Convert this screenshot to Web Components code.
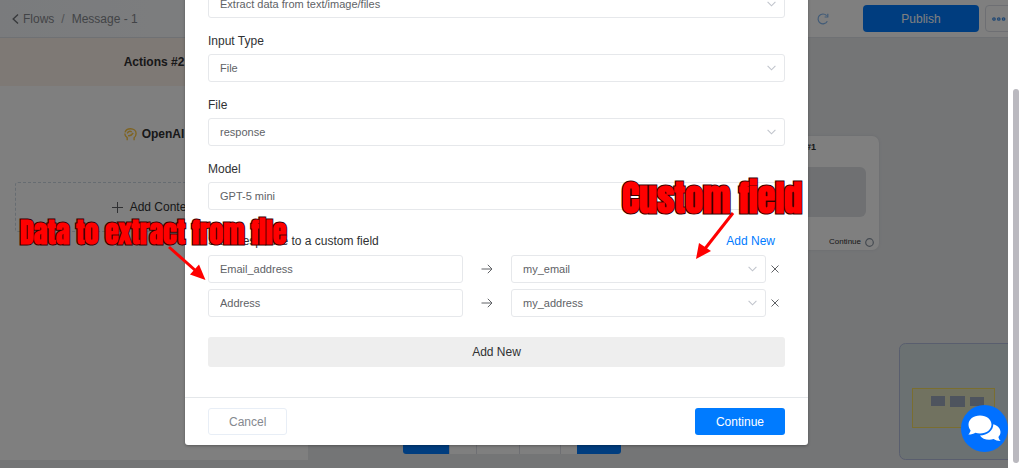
<!DOCTYPE html>
<html lang="en">
<head>
<meta charset="utf-8">
<title>Flow editor</title>
<style>
  html, body {
    margin: 0;
    height: 100%;
    overflow: hidden;
  }
  body {
    font-family: "Liberation Sans", Arial, sans-serif;
    font-size: 12px;
    color: #303133;
    background: #fff;
    --primary: #007bff;
    --border: #e6e8eb;
  }
</style>
</head>
<body>
<flow-app></flow-app>

<script>
function attach(el, html) {
  el.attachShadow({ mode: "open" }).innerHTML = html;
}

class TopBar extends HTMLElement {
  constructor() {
    super();
    attach(this, `
      <style>
        :host {
          display: flex;
          align-items: center;
          height: 37px;
          padding-left: 12px;
          margin-right: -5px;
          background: linear-gradient(90deg, #f4f7fb, #fff 40%);
          border-bottom: 1px solid #dfe3e8;
        }
        nav {
          display: flex;
          align-items: center;
          flex: 1;
          color: #85888e;
        }
        a {
          display: flex;
          align-items: center;
          gap: 4px;
          color: inherit;
          text-decoration: none;
        }
        .sep { margin: 0 7px; color: #a0a3a9; }
        button {
          font: inherit;
          height: 27px;
          padding: 0;
          border-radius: 4px;
          box-sizing: border-box;
        }
        .refresh {
          width: 12px;
          margin-right: 34px;
          border: 0;
          background: none;
        }
        .publish {
          width: 116px;
          margin-right: 6px;
          border: 0;
          background: var(--primary);
          color: #fff;
        }
        .more {
          width: 28px;
          border: 1px solid #dcdfe6;
          background: #fff;
        }
        svg { display: block; }
        .more svg { margin-left: 6px; }
      </style>
      <nav>
        <a href="#flows">
          <svg width="7" height="10" fill="none" stroke="#707378" stroke-width="1.4"><path d="M6 0.5 1.2 5 6 9.5"/></svg>
          Flows
        </a>
        <span class="sep">/</span>
        <span>Message - 1</span>
      </nav>
      <button class="refresh" aria-label="Refresh">
        <svg width="12" height="12" fill="none" stroke="#82b6ef" stroke-width="1.2"><path d="M10.3 8.2A4.9 4.9 0 1 1 9.6 2.6M10.8 0.8V4H7.6"/></svg>
      </button>
      <button class="publish">Publish</button>
      <button class="more" aria-label="More">
        <svg width="14" height="4" fill="none" stroke="#3f8fe6" stroke-width="1.3"><circle cx="2" cy="2" r="1.2"/><circle cx="6.8" cy="2" r="1.2"/><circle cx="11.6" cy="2" r="1.2"/></svg>
      </button>
    `);
  }
}
customElements.define("top-bar", TopBar);

class SidePanel extends HTMLElement {
  constructor() {
    super();
    attach(this, `
      <style>
        :host {
          display: flex;
          flex-direction: column;
          width: 308px;
          margin-bottom: 8px;
          background: #fff;
        }
        h2 {
          margin: 0;
          font-size: 12px;
          line-height: 48px;
          text-align: center;
          background: #fdf2ea;
        }
        .item {
          display: flex;
          align-items: center;
          justify-content: center;
          gap: 5px;
          height: 96px;
          font-weight: bold;
        }
        .add {
          display: flex;
          align-items: center;
          justify-content: center;
          gap: 7px;
          height: 50px;
          margin: 0 15px;
          padding: 0;
          font: inherit;
          color: inherit;
          background: none;
          border: 1px dashed #ccd8e2;
          border-radius: 3px;
        }
      </style>
      <h2>Actions #2</h2>
      <div class="item">
        <svg width="13" height="13" fill="none" stroke="#ffc845" stroke-width="1.4">
          <path d="M3.200 12.300V9.600C1.200 8.400.8 7 .8 5.600M1 4.400C1.800 1.800 4 .8 6.500.8c3.200 0 5.600 2 5.600 4.800 0 2-.9 3.300-2 4.200v2.500"/>
          <path d="M3.200 5.400C4 3.600 6 3 7.800 3.800M4 7.600c2.400.6 4-.8 5.200-2.600"/>
        </svg>
        OpenAI
      </div>
      <button class="add">
        <svg width="11" height="11" stroke="#606266"><path d="M5.5 0v11M0 5.5h11"/></svg>
        Add Content
      </button>
    `);
  }
}
customElements.define("side-panel", SidePanel);

class FlowCanvas extends HTMLElement {
  constructor() {
    super();
    attach(this, `
      <style>
        :host {
          display: block;
          flex: 1;
          position: relative;
        }
        .node {
          position: absolute;
          top: 98px;
          right: 129px;
          width: 176px;
          height: 114px;
          box-sizing: border-box;
          padding: 0 13px;
          background: #fff;
          border-radius: 7px;
          box-shadow: 0 0 3px #d3d6da;
        }
        .title {
          padding-right: 50px;
          font-size: 9px;
          font-weight: bold;
          line-height: 22px;
          text-align: right;
        }
        .content {
          height: 50px;
          margin-top: 9px;
          background: #dfe1e5;
          border-radius: 6px;
        }
        .out {
          display: flex;
          align-items: center;
          justify-content: flex-end;
          gap: 4px;
          margin: 20px -8px 0 0;
          font-size: 8px;
          line-height: 10px;
        }
        .minimap {
          position: absolute;
          right: -9px;
          bottom: 8px;
        }
        .tools {
          position: absolute;
          left: 95px;
          bottom: 14px;
          display: grid;
          grid-template-columns: 46px 27px 43px 41px 17px 44px;
          height: 28px;
          border-radius: 3px;
          overflow: hidden;
          background: #fff;
        }
        .tools span + span { border-left: 1px solid #dcdfe6; }
        .tools span:first-child, .tools span:last-child {
          background: var(--primary);
          border: 0;
        }
      </style>
      <div class="node">
        <div class="title">#1</div>
        <div class="content"></div>
        <div class="out">
          Continue
          <svg width="9" height="9" fill="none" stroke="#8a95a3" stroke-width="1.2"><circle cx="4.5" cy="4.5" r="3.8"/></svg>
        </div>
      </div>
      <svg class="minimap" width="118" height="117">
        <rect x=".5" y=".5" width="117" height="116" rx="6" fill="#d6e2e4" stroke="#b2bcdc"/>
        <rect x="13.5" y="45.5" width="82" height="39" fill="#e2e4c0" stroke="#f4dc60"/>
        <g fill="#9ca8bc"><path d="M32 53h14v10H32zM51 53h15v11H51zM71 54h14v9H71z"/></g>
      </svg>
      <div class="tools"><span></span><span></span><span></span><span></span><span></span><span></span></div>
    `);
  }
}
customElements.define("flow-canvas", FlowCanvas);

class SelectBox extends HTMLElement {
  constructor() {
    super();
    const label = this.getAttribute("label") || "";
    const value = this.getAttribute("value");
    const hidden = this.hasAttribute("plain");
    attach(this, `
      <style>
        :host { display: block; }
        label {
          display: block;
          line-height: 26px;
        }
        .box {
          display: grid;
          grid-template-columns: 1fr 18px;
          align-items: center;
        }
        select {
          grid-area: 1 / 1 / 2 / 3;
          width: 100%;
          height: 28px;
          padding: 0 11px;
          font: inherit;
          font-size: 11px;
          color: #606266;
          background: #fff;
          border: 1px solid var(--border);
          border-radius: 3px;
          appearance: none;
        }
        svg {
          grid-area: 1 / 2;
          pointer-events: none;
        }
      </style>
      ${hidden ? "" : `<label for="select">${label}</label>`}
      <div class="box">
        <select id="select" ${hidden ? `aria-label="${label}"` : ""}><option>${value}</option></select>
        <svg width="9" height="6" fill="none" stroke="#c0c4cc" stroke-width="1.1"><path d="M.6.8 4.5 4.8 8.4.8"/></svg>
      </div>
    `);
  }
}
customElements.define("select-box", SelectBox);

class MappingRow extends HTMLElement {
  constructor() {
    super();
    attach(this, `
      <style>
        :host {
          display: grid;
          grid-template-columns: 1fr 48px 1fr 19px;
          align-items: center;
        }
        input {
          width: 100%;
          height: 28px;
          box-sizing: border-box;
          padding: 0 11px;
          font: inherit;
          font-size: 11px;
          color: #606266;
          border: 1px solid var(--border);
          border-radius: 3px;
        }
        svg { display: block; }
        .arrow { justify-self: center; }
        button {
          justify-self: end;
          width: 14px;
          height: 14px;
          padding: 3px 0;
          border: 0;
          background: none;
        }
      </style>
      <input aria-label="Data to extract" value="${this.getAttribute("name")}">
      <svg class="arrow" width="12" height="10" fill="none" stroke="#606266"><path d="M.5 5h10.3M6.8.8 11 5 6.8 9.2"/></svg>
      <select-box plain label="Custom field" value="${this.getAttribute("field")}"></select-box>
      <button aria-label="Remove">
        <svg width="8" height="8" stroke="#606266"><path d="M.5.5l7 7M7.5.5l-7 7"/></svg>
      </button>
    `);
  }
}
customElements.define("mapping-row", MappingRow);

class ModalDialog extends HTMLElement {
  constructor() {
    super();
    attach(this, `
      <style>
        :host {
          display: block;
          width: 623px;
          max-width: 100%;
          background: #fff;
          border-radius: 3px;
          box-shadow: 0 1px 3px rgba(0, 0, 0, .3);
        }
        .body {
          padding: 20px 23px 30px;
        }
        footer {
          display: flex;
          justify-content: space-between;
          padding: 10px 23px;
          border-top: 1px solid #e4e7ea;
        }
      </style>
      <div class="body"><slot></slot></div>
      <footer><slot name="footer"></slot></footer>
    `);
  }
}
customElements.define("modal-dialog", ModalDialog);

class CalloutNote extends HTMLElement {
  constructor() {
    super();
    attach(this, `
      <style>
        :host {
          position: absolute;
          font-family: Impact, Anton, "Roboto Condensed", "Open Sans Condensed", "Noto Sans Condensed", "Liberation Sans", sans-serif;
          font-weight: 900;
          line-height: 1;
          color: #f00;
          white-space: nowrap;
          pointer-events: none;
          -webkit-text-stroke: 2px #300;
          paint-order: stroke fill;
        }
      </style>
      <slot></slot>
    `);
  }
}
customElements.define("callout-note", CalloutNote);

class FlowApp extends HTMLElement {
  constructor() {
    super();
    attach(this, `
      <style>
        :host {
          display: flex;
          position: relative;
          height: 100vh;
          overflow: hidden;
        }
        .page {
          display: flex;
          flex-direction: column;
          flex: 1;
          min-width: 0;
          overflow: hidden;
          background: #e8eaed;
        }
        main {
          display: flex;
          flex: 1;
        }
        .scroll {
          width: 16px;
          display: flex;
          box-sizing: border-box;
          padding: 89px 5px 5px;
        }
        .scroll div {
          flex: 1;
          border-radius: 3px;
          background: #bab9bf;
        }
        .overlay {
          position: absolute;
          inset: 0 16px 0 0;
          display: flex;
          align-items: flex-end;
          justify-content: center;
          padding: 0 15px 23px 0;
          overflow: hidden;
          background: rgba(0, 0, 0, .5);
        }
        select-box { margin-bottom: 10px; }
        .row {
          display: flex;
          justify-content: space-between;
          margin-top: 17px;
          padding-right: 10px;
          line-height: 28px;
        }
        .row a {
          color: var(--primary);
          text-decoration: none;
        }
        mapping-row + mapping-row { margin-top: 6px; }
        button {
          font: inherit;
          height: 27px;
          padding: 0 20px;
          border: 0;
          border-radius: 3px;
        }
        .wide {
          width: 100%;
          height: 30px;
          margin-top: 20px;
          display: block;
          color: #303133;
          background: #eee;
        }
        .cancel {
          color: #85898f;
          background: #fff;
          border: 1px solid #e8eef6;
        }
        .primary {
          padding: 0 21px;
          color: #fff;
          background: var(--primary);
        }
        .chat {
          position: absolute;
          right: 16px;
          bottom: 16px;
          width: 47px;
          height: 47px;
          padding: 0 0 0 7px;
          border-radius: 50%;
          background: #0070ff;
        }
        .chat svg { display: block; }
        .arrows {
          position: absolute;
          left: 0;
          top: 0;
          pointer-events: none;
        }
        .data { left: 20px; top: 218px; font-size: 28px; }
        .custom { left: 622px; top: 180px; font-size: 36px; }
      </style>
      <div class="page">
        <top-bar></top-bar>
        <main>
          <side-panel></side-panel>
          <flow-canvas></flow-canvas>
        </main>
      </div>
      <div class="scroll"><div></div></div>
      <div class="overlay">
        <modal-dialog>
          <select-box plain label="Action" value="Extract data from text/image/files"></select-box>
          <select-box label="Input Type" value="File"></select-box>
          <select-box label="File" value="response"></select-box>
          <select-box label="Model" value="GPT-5 mini"></select-box>
          <div class="row"><span>Save response to a custom field</span><a href="#add">Add New</a></div>
          <mapping-row name="Email_address" field="my_email"></mapping-row>
          <mapping-row name="Address" field="my_address"></mapping-row>
          <button class="wide">Add New</button>
          <button slot="footer" class="cancel">Cancel</button>
          <button slot="footer" class="primary">Continue</button>
        </modal-dialog>
      </div>
      <button class="chat" aria-label="Chat">
        <svg width="33" height="27" fill="#fff">
          <path d="M12 .5C18.600.5 23.500 4.400 23.500 9.500S18.600 18.500 12 18.500c-1.600 0-3.200-.3-4.600-.8C5.600 18.800 3.500 19.500.3 19.500c1.200-1.200 2-2.700 2.300-4.100C1.200 13.800.5 11.700.5 9.500.5 4.400 5.400.5 12 .5z"/>
          <path d="M25.300 9.200c4.300 1.100 7.200 4.200 7.200 7.800 0 2-.8 3.600-2.100 4.900.3 1.500 1.100 2.900 2.300 4.100-3 0-5.400-.7-7.100-1.900-1.400.5-2.900.7-4.400.7-4 0-7.600-1.700-9.300-4.400 7.200.1 13.400-4.700 13.400-11.200z"/>
        </svg>
      </button>
      <svg class="arrows" width="1008" height="468" fill="#f00" stroke="#f00">
        <path d="M169 247 196 271" stroke-width="3"/>
        <path d="M205.500 280 199 264.500 190 274.500z" stroke="none"/>
        <path d="M733 213 704 250" stroke-width="3"/>
        <path d="M696 259 699 243 711 251z" stroke="none"/>
      </svg>
      <callout-note class="data">Data to extract from file</callout-note>
      <callout-note class="custom">Custom field</callout-note>
    `);
  }
}
customElements.define("flow-app", FlowApp);
</script>
</body>
</html>
